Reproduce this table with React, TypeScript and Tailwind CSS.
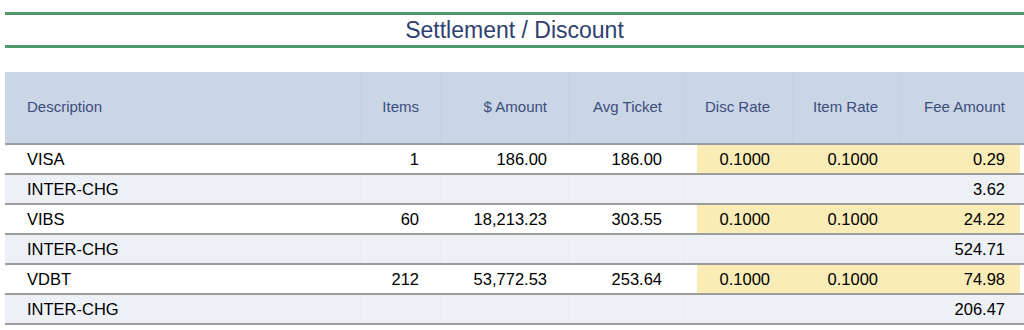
import React from 'react'

type Row = {
  desc: string
  items?: string
  amount?: string
  avg?: string
  disc?: string
  itemRate?: string
  fee: string
}

const rows: Row[] = [
  { desc: 'VISA', items: '1', amount: '186.00', avg: '186.00', disc: '0.1000', itemRate: '0.1000', fee: '0.29' },
  { desc: 'INTER-CHG', fee: '3.62' },
  { desc: 'VIBS', items: '60', amount: '18,213.23', avg: '303.55', disc: '0.1000', itemRate: '0.1000', fee: '24.22' },
  { desc: 'INTER-CHG', fee: '524.71' },
  { desc: 'VDBT', items: '212', amount: '53,772.53', avg: '253.64', disc: '0.1000', itemRate: '0.1000', fee: '74.98' },
  { desc: 'INTER-CHG', fee: '206.47' },
]

export default function App() {
  return (
    <div
      className="w-[1024px] h-[330px] overflow-hidden bg-white pl-[5px]"
      style={{ fontFamily: '"Liberation Sans", Arial, sans-serif' }}
    >
      {/* Title block */}
      <div className="pt-[12px]">
        <div className="h-[3px] bg-[#4f9a6c]" />
        <h1 className="h-[30px] leading-[30px] text-center text-[23px] text-[#2f4070]">Settlement / Discount</h1>
        <div className="h-[3px] bg-[#4f9a6c]" />
      </div>

      <div className="h-[24px]" />

      {/* Header */}
      <div className="flex h-[73px] items-center bg-[#cad5e6] border-b-2 border-[#999ea6] text-[15px] text-[#3c4d7c]">
        <div className="w-[355px] h-full flex items-center pl-[22px]">Description</div>
        <div className="w-[80px] h-full flex items-center justify-end pr-[21px] border-l border-[#c6d1e2]">Items</div>
        <div className="w-[128px] h-full flex items-center justify-end pr-[21px] border-l border-[#c6d1e2]">$ Amount</div>
        <div className="w-[115px] h-full flex items-center justify-end pr-[21px] border-l border-[#c6d1e2]">Avg Ticket</div>
        <div className="w-[109px] h-full flex items-center justify-end pr-[22px] border-l border-[#c6d1e2]">Disc Rate</div>
        <div className="w-[108px] h-full flex items-center justify-end pr-[22px] border-l border-[#c6d1e2]">Item Rate</div>
        <div className="flex-1 h-full flex items-center justify-end pr-[19px] border-l border-[#c6d1e2]">Fee Amount</div>
      </div>

      {/* Body */}
      {rows.map((r, idx) => {
        const sub = !r.items
        return (
          <div
            key={idx}
            className={`flex h-[30px] border-b-2 border-[#9c9c9c] text-[16.5px] text-black ${
              sub ? 'bg-[#edf0f5]' : 'bg-white'
            }`}
          >
            <div className="w-[355px] flex items-center pl-[22px]">{r.desc}</div>
            <div className={`w-[80px] flex items-center justify-end pr-[21px] ${sub ? 'border-l border-[#e9ecf2]' : ''}`}>
              {r.items}
            </div>
            <div className={`w-[128px] flex items-center justify-end pr-[21px] ${sub ? 'border-l border-[#e9ecf2]' : ''}`}>
              {r.amount}
            </div>
            <div className={`w-[115px] flex items-center justify-end pr-[21px] ${sub ? 'border-l border-[#e9ecf2]' : ''}`}>
              {r.avg}
            </div>
            {sub ? (
              <div className="flex-1 flex items-center justify-end pr-[19px] border-l border-[#e9ecf2]">{r.fee}</div>
            ) : (
              <div className="flex-1 flex ml-[14px] mr-[4px] bg-[#f9ecb6]">
                <div className="w-[95px] flex items-center justify-end pr-[22px]">{r.disc}</div>
                <div className="w-[108px] flex items-center justify-end pr-[22px]">{r.itemRate}</div>
                <div className="flex-1 flex items-center justify-end pr-[15px]">{r.fee}</div>
              </div>
            )}
          </div>
        )
      })}
    </div>
  )
}
